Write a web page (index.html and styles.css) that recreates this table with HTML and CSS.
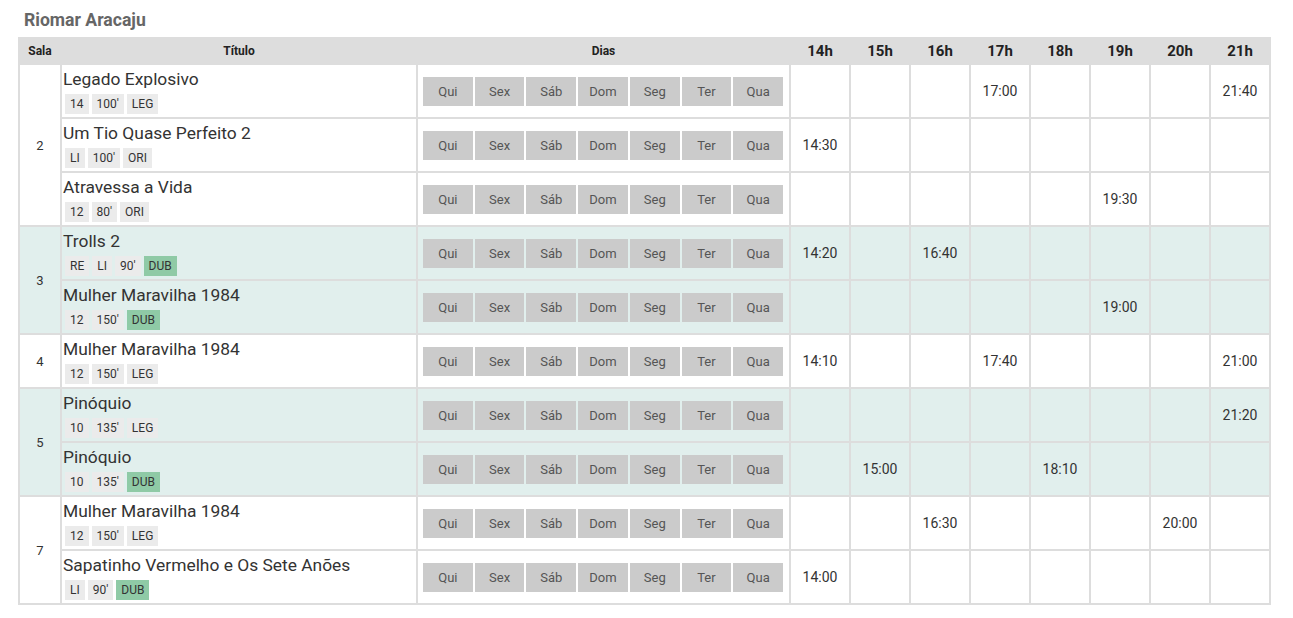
FILE: index.html
```html
<!DOCTYPE html>
<html lang="pt-BR">
<head>
  <meta charset="UTF-8">
  <title>Riomar Aracaju</title>
  <link rel="stylesheet" href="styles.css">
</head>
<body>
  <div class="cinema">
    <h2>Riomar Aracaju</h2>
    <table class="grade">
      <colgroup>
        <col class="c-sala"><col class="c-titulo"><col class="c-dias">
        <col class="c-hora"><col class="c-hora"><col class="c-hora"><col class="c-hora">
        <col class="c-hora"><col class="c-hora"><col class="c-hora"><col class="c-hora">
      </colgroup>
      <thead>
        <tr>
          <th class="sala">Sala</th><th>Título</th><th>Dias</th>
          <th class="hora">14h</th><th class="hora">15h</th><th class="hora">16h</th><th class="hora">17h</th>
          <th class="hora">18h</th><th class="hora">19h</th><th class="hora">20h</th><th class="hora">21h</th>
        </tr>
      </thead>
      <tbody>
        <tr>
          <td class="sala" rowspan="3">2</td>
          <td class="titulo"><div class="nome">Legado Explosivo</div><div class="tags"><span>14</span><span>100'</span><span>LEG</span></div></td>
          <td class="dias"><div class="semana"><span>Qui</span><span>Sex</span><span>Sáb</span><span>Dom</span><span>Seg</span><span>Ter</span><span>Qua</span></div></td>
          <td></td><td></td><td></td><td>17:00</td><td></td><td></td><td></td><td>21:40</td>
        </tr>
        <tr>
          <td class="titulo"><div class="nome">Um Tio Quase Perfeito 2</div><div class="tags"><span>LI</span><span>100'</span><span>ORI</span></div></td>
          <td class="dias"><div class="semana"><span>Qui</span><span>Sex</span><span>Sáb</span><span>Dom</span><span>Seg</span><span>Ter</span><span>Qua</span></div></td>
          <td>14:30</td><td></td><td></td><td></td><td></td><td></td><td></td><td></td>
        </tr>
        <tr>
          <td class="titulo"><div class="nome">Atravessa a Vida</div><div class="tags"><span>12</span><span>80'</span><span>ORI</span></div></td>
          <td class="dias"><div class="semana"><span>Qui</span><span>Sex</span><span>Sáb</span><span>Dom</span><span>Seg</span><span>Ter</span><span>Qua</span></div></td>
          <td></td><td></td><td></td><td></td><td></td><td>19:30</td><td></td><td></td>
        </tr>
        <tr class="alt">
          <td class="sala" rowspan="2">3</td>
          <td class="titulo"><div class="nome">Trolls 2</div><div class="tags"><span>RE</span><span>LI</span><span>90'</span><span class="dub">DUB</span></div></td>
          <td class="dias"><div class="semana"><span>Qui</span><span>Sex</span><span>Sáb</span><span>Dom</span><span>Seg</span><span>Ter</span><span>Qua</span></div></td>
          <td>14:20</td><td></td><td>16:40</td><td></td><td></td><td></td><td></td><td></td>
        </tr>
        <tr class="alt">
          <td class="titulo"><div class="nome">Mulher Maravilha 1984</div><div class="tags"><span>12</span><span>150'</span><span class="dub">DUB</span></div></td>
          <td class="dias"><div class="semana"><span>Qui</span><span>Sex</span><span>Sáb</span><span>Dom</span><span>Seg</span><span>Ter</span><span>Qua</span></div></td>
          <td></td><td></td><td></td><td></td><td></td><td>19:00</td><td></td><td></td>
        </tr>
        <tr>
          <td class="sala">4</td>
          <td class="titulo"><div class="nome">Mulher Maravilha 1984</div><div class="tags"><span>12</span><span>150'</span><span>LEG</span></div></td>
          <td class="dias"><div class="semana"><span>Qui</span><span>Sex</span><span>Sáb</span><span>Dom</span><span>Seg</span><span>Ter</span><span>Qua</span></div></td>
          <td>14:10</td><td></td><td></td><td>17:40</td><td></td><td></td><td></td><td>21:00</td>
        </tr>
        <tr class="alt">
          <td class="sala" rowspan="2">5</td>
          <td class="titulo"><div class="nome">Pinóquio</div><div class="tags"><span>10</span><span>135'</span><span>LEG</span></div></td>
          <td class="dias"><div class="semana"><span>Qui</span><span>Sex</span><span>Sáb</span><span>Dom</span><span>Seg</span><span>Ter</span><span>Qua</span></div></td>
          <td></td><td></td><td></td><td></td><td></td><td></td><td></td><td>21:20</td>
        </tr>
        <tr class="alt">
          <td class="titulo"><div class="nome">Pinóquio</div><div class="tags"><span>10</span><span>135'</span><span class="dub">DUB</span></div></td>
          <td class="dias"><div class="semana"><span>Qui</span><span>Sex</span><span>Sáb</span><span>Dom</span><span>Seg</span><span>Ter</span><span>Qua</span></div></td>
          <td></td><td>15:00</td><td></td><td></td><td>18:10</td><td></td><td></td><td></td>
        </tr>
        <tr>
          <td class="sala" rowspan="2">7</td>
          <td class="titulo"><div class="nome">Mulher Maravilha 1984</div><div class="tags"><span>12</span><span>150'</span><span>LEG</span></div></td>
          <td class="dias"><div class="semana"><span>Qui</span><span>Sex</span><span>Sáb</span><span>Dom</span><span>Seg</span><span>Ter</span><span>Qua</span></div></td>
          <td></td><td></td><td>16:30</td><td></td><td></td><td></td><td>20:00</td><td></td>
        </tr>
        <tr>
          <td class="titulo"><div class="nome">Sapatinho Vermelho e Os Sete Anões</div><div class="tags"><span>LI</span><span>90'</span><span class="dub">DUB</span></div></td>
          <td class="dias"><div class="semana"><span>Qui</span><span>Sex</span><span>Sáb</span><span>Dom</span><span>Seg</span><span>Ter</span><span>Qua</span></div></td>
          <td>14:00</td><td></td><td></td><td></td><td></td><td></td><td></td><td></td>
        </tr>
      </tbody>
    </table>
  </div>
</body>
</html>
```

FILE: styles.css
```css
body {
  margin: 0;
  font-family: Roboto, "Liberation Sans", sans-serif;
  color: #333;
  background: #fff;
}
.cinema {
  padding: 10px 0 0 18px;
}
.cinema h2 {
  margin: 0 0 6px 6px;
  font-size: 17.6px;
  line-height: 21px;
  font-weight: bold;
  color: #666;
}
.grade {
  border-collapse: collapse;
  table-layout: fixed;
  width: 1251px;
}
.c-sala { width: 42px; }
.c-titulo { width: 356px; }
.c-dias { width: 373px; }
.c-hora { width: 60px; }
.grade th,
.grade td {
  border: 2px solid #ddd;
  padding: 0;
  text-align: center;
  vertical-align: middle;
}
.grade th {
  background: #ddd;
  font-size: 12px;
  height: 24px;
  color: #222;
}
.grade th.hora {
  font-size: 15px;
}
.grade td {
  height: 50px;
  font-size: 14px;
}
.grade td.sala {
  font-size: 13px;
}
.grade tr.alt td {
  background: #e1efed;
}
.grade td.titulo {
  text-align: left;
  vertical-align: top;
  padding: 2px 2px 0 1px;
}
.nome {
  font-size: 17.4px;
  line-height: 24px;
  white-space: nowrap;
}
.tags {
  display: flex;
  gap: 3px;
  margin-top: 3px;
  margin-left: 2px;
}
.tags span {
  background: #ebebeb;
  font-size: 12px;
  line-height: 20px;
  padding: 0 5px;
  color: #333;
}
.tags span.dub {
  background: #8fcaa6;
}
.grade td.dias {
  padding: 0 6px 0 5px;
}
.semana {
  display: flex;
  gap: 2px;
}
.semana span {
  flex: 1;
  background: #cbcbcb;
  color: #555;
  font-size: 13px;
  line-height: 29px;
}
```
